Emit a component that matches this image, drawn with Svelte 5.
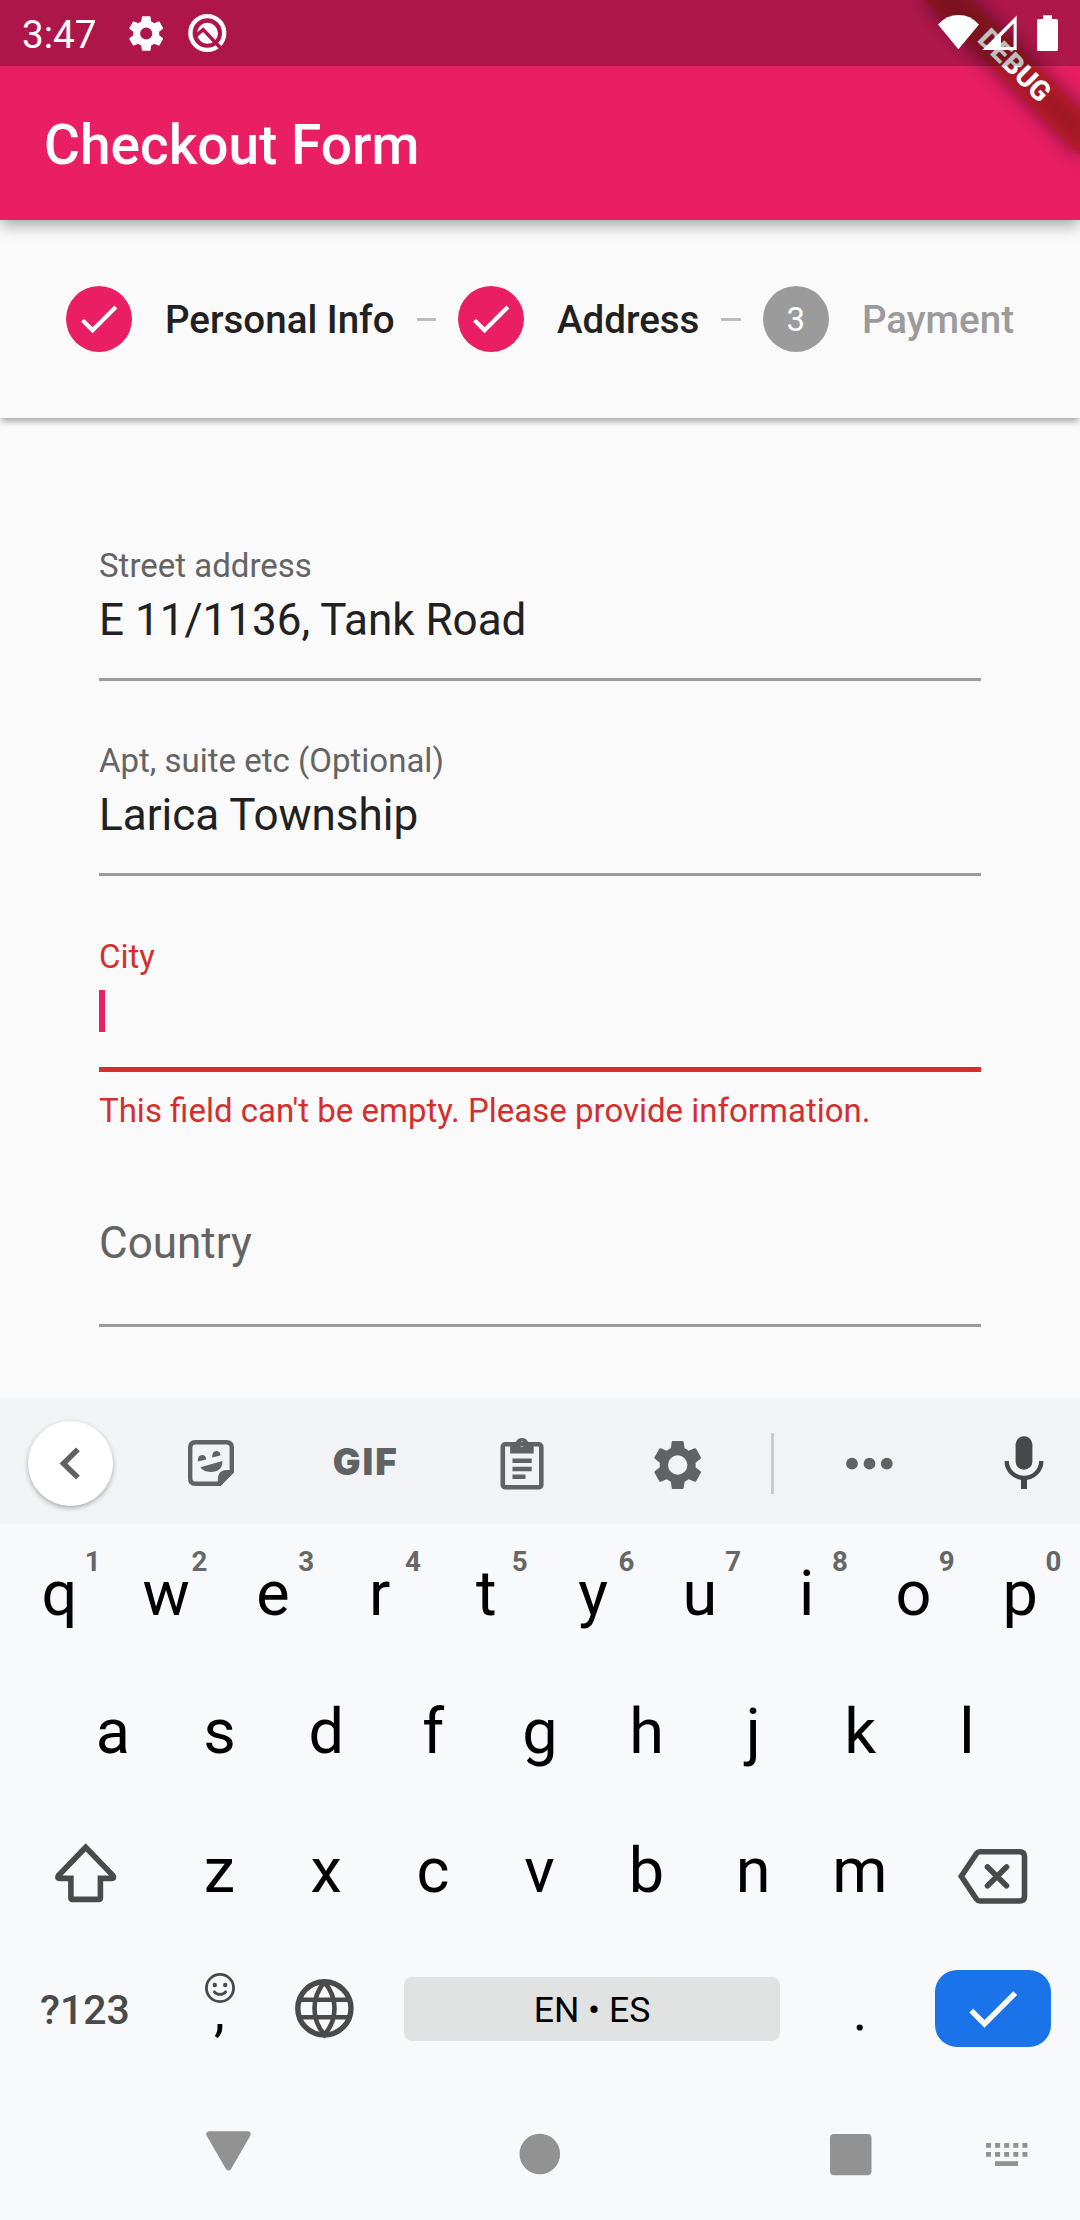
<script>
  const gear =
    'M19.43 12.98c.04-.32.07-.64.07-.98s-.03-.66-.07-.98l2.11-1.65c.19-.15.24-.42.12-.64l-2-3.46c-.12-.22-.39-.3-.61-.22l-2.49 1c-.52-.4-1.08-.73-1.69-.98l-.38-2.65C14.46 2.18 14.25 2 14 2h-4c-.25 0-.46.18-.49.42l-.38 2.65c-.61.25-1.17.59-1.69.98l-2.49-1c-.23-.09-.49 0-.61.22l-2 3.46c-.13.22-.07.49.12.64l2.11 1.65c-.04.32-.07.65-.07.98s.03.66.07.98l-2.11 1.65c-.19.15-.24.42-.12.64l2 3.46c.12.22.39.3.61.22l2.49-1c.52.4 1.08.73 1.69.98l.38 2.65c.03.24.24.42.49.42h4c.25 0 .46-.18.49-.42l.38-2.65c.61-.25 1.17-.59 1.69-.98l2.49 1c.23.09.49 0 .61-.22l2-3.46c.12-.22.07-.49-.12-.64z';
  const smallHole = 'M12 15.5a3.5 3.5 0 1 1 0-7 3.5 3.5 0 0 1 0 7z';
  const largeHole = 'M12 16.05a4.05 4.05 0 1 1 0-8.1 4.05 4.05 0 0 1 0 8.1z';
  const check = 'M9 16.17L4.83 12l-1.42 1.41L9 19 21 7l-1.41-1.41z';

  const steps = [
    { label: 'Personal Info', done: true },
    { label: 'Address', done: true },
    { label: 'Payment', done: false }
  ];

  const fields = [
    { label: 'Street address', value: 'E 11/1136, Tank Road' },
    { label: 'Apt, suite etc (Optional)', value: 'Larica Township' }
  ];

  const topRow = [...'qwertyuiop'].map((letter, i) => ({ letter, digit: (i + 1) % 10 }));
  const homeRow = [...'asdfghjkl'];
  const bottomRow = [...'zxcvbnm'];
  const dotColumns = [986, 995.1, 1004.2, 1013.3, 1022.4];
</script>

<div class="screen">
  <header>
    <div class="statusbar">
      <span class="clock">3:47</span>
      <svg class="notices" viewBox="120 0 120 66">
        <path transform="translate(125.4 12.7) scale(1.735)" fill-rule="evenodd" d="{gear}{smallHole}" />
        <mask id="cut" maskUnits="userSpaceOnUse" x="180" y="0" width="60" height="66">
          <rect x="180" y="0" width="60" height="66" fill="#fff" />
          <path d="M195 36.4L203.2 29.6 222 49.4" fill="none" stroke="#000" stroke-width="3.6" />
        </mask>
        <g mask="url(#cut)">
          <circle cx="207.3" cy="33" r="16.9" fill="none" stroke="#fff" stroke-width="4.4" />
          <circle cx="207.5" cy="33.3" r="10.5" />
        </g>
      </svg>
      <svg class="signals" viewBox="930 0 150 66">
        <path d="M938 24.4Q946.5 15 958.5 15T979 24.4L958.4 49.2z" />
        <path fill-rule="evenodd" d="M982.3 50L1016.7 15.4V50zM1001 47H1013.6V23.5L1001 36.5z" />
        <path d="M1043 19V15.2h9V19h4.5q1.5 0 1.5 1.5v29q0 1.5-1.5 1.5h-18q-1.5 0-1.5-1.5v-29q0-1.5 1.5-1.5z" />
      </svg>
    </div>
    <h1>Checkout Form</h1>
    <div class="ribbon-clip">
      <div class="ribbon"><span>DEBUG</span></div>
    </div>
  </header>

  <nav class="stepper">
    {#each steps as step, i}
      {#if i > 0}<i class="connector"></i>{/if}
      <div class="step" class:pending={!step.done}>
        <span class="bullet">
          {#if step.done}
            <svg viewBox="0 0 24 24"><path d={check} /></svg>
          {:else}
            {i + 1}
          {/if}
        </span>
        <span class="step-label">{step.label}</span>
      </div>
    {/each}
  </nav>

  <main>
    {#each fields as field}
      <div class="field">
        <div class="label">{field.label}</div>
        <div class="value">{field.value}</div>
      </div>
    {/each}
    <div class="field error">
      <div class="label">City</div>
      <div class="value"><i class="caret"></i></div>
    </div>
    <p class="helper">This field can't be empty. Please provide information.</p>
    <div class="field empty">
      <div class="value">Country</div>
    </div>
  </main>

  <section class="keyboard">
    <div class="toolbar">
      <div class="back">
        <svg viewBox="27 1420 86 86"><path d="M77.5 1448.7L62.9 1463l14.6 14.3" /></svg>
      </div>
      <svg class="w142" viewBox="140 1402 142 122">
        <path fill="none" stroke-width="4.4" d="M195.5 1442.2H226.5Q231.8 1442.2 231.8 1447.5V1471.5L219.5 1483.8H195.5Q190.2 1483.8 190.2 1478.5V1447.5Q190.2 1442.2 195.5 1442.2z" />
        <path stroke="none" d="M217.8 1485V1480Q217.8 1470 226 1470H233.5V1472.5L220.5 1486z" />
        <path stroke="none" d="M197.8 1461.4q0-6.4 4.2-6.4t4.2 4.6zM212.2 1457.5q0-6.4 4.1-6.4t4.1 4.5zM200.4 1467.3l22-6.4q0 11-11.8 11-7.4 0-10.2-4.6z" />
      </svg>
      <span class="gif">GIF</span>
      <svg class="w148" viewBox="447.5 1402 148 122">
        <rect x="502.3" y="1444.3" width="38.5" height="43" rx="2.6" fill="none" stroke-width="4.6" />
        <path stroke="none" fill-rule="evenodd" d="M509.6 1442h5.8a6.6 6.6 0 0 1 12.2 0h5.6v11.4h-23.6zM521.4 1441.4a2.7 2.9 0 1 0 .1 0z" />
        <path stroke="none" d="M512 1458.6h19.2v4.4H512zM512 1466.8h19.2v4.4H512zM512 1474.6h13v4.4H512z" />
      </svg>
      <svg class="w163" viewBox="595.6 1402 163.4 122">
        <path stroke="none" fill-rule="evenodd" transform="translate(648.5 1436.2) scale(2.4)" d="{gear}{largeHole}" />
      </svg>
      <i class="divider"></i>
      <svg class="w167" viewBox="786 1402 167 122">
        <g stroke="none">
          <circle cx="852" cy="1463.7" r="5.9" /><circle cx="869.5" cy="1463.7" r="5.9" /><circle cx="886.8" cy="1463.7" r="5.9" />
        </g>
      </svg>
      <svg class="w127 dark" viewBox="953 1402 127 122">
        <rect x="1015.6" y="1436.2" width="16.8" height="33.6" rx="8.4" stroke="none" />
        <path fill="none" stroke-width="4.4" d="M1006.7 1461a17.3 17 0 0 0 34.6 0" />
        <path stroke="none" d="M1021 1477h6v12h-6z" />
      </svg>
    </div>

    <div class="row top">
      {#each topRow as key}
        <div class="key">{key.letter}<sup>{key.digit}</sup></div>
      {/each}
    </div>
    <div class="row home">
      {#each homeRow as letter}<div class="key">{letter}</div>{/each}
    </div>
    <div class="row bottom">
      <svg class="shift" viewBox="0 1801 166 138">
        <path d="M85.7 1847.2L58.7 1875.2Q56.5 1878.4 59.8 1878.4H70.9V1897.8Q70.9 1899.4 72.5 1899.4H98.8Q100.4 1899.4 100.4 1897.8V1878.4H111.6Q114.9 1878.4 112.7 1875.2z" />
      </svg>
      {#each bottomRow as letter}<div class="key">{letter}</div>{/each}
      <svg class="erase" viewBox="913 1801 167 138">
        <path d="M961.3 1876.3L976.5 1853.5Q977.8 1851.7 980 1851.7H1019.6Q1024.5 1851.7 1024.5 1856.6V1896.2Q1024.5 1901 1019.6 1901H980Q977.8 1901 976.5 1899.2z" />
        <path stroke-linecap="round" d="M987.5 1867l19 18.8M1006.5 1867l-19 18.8" />
      </svg>
    </div>
    <div class="row controls">
      <span class="symbols">?123</span>
      <div class="comma">
        <svg viewBox="203 1972 32 32">
          <circle cx="219" cy="1988" r="13.6" />
          <path d="M213.4 1991.8q2 2.6 5.6 2.6t5.6-2.6" stroke-linecap="round" />
          <g class="eyes"><circle cx="213.8" cy="1985" r="2.2" /><circle cx="224.2" cy="1985" r="2.2" /></g>
        </svg>
        <span>,</span>
      </div>
      <svg class="globe" viewBox="269 1939 111 138">
        <circle cx="324.4" cy="2008.4" r="26.6" />
        <path d="M299 1999.8h51M299 2017.2h51" stroke-width="4.6" />
        <path d="M324.4 1982Q314.5 1994 314.5 2008.4T324.4 2034.8Q334.5 2022.8 334.5 2008.4T324.4 1982" stroke-width="4.6" />
      </svg>
      <span class="space">EN • ES</span>
      <span class="period">.</span>
      <span class="enter"><svg viewBox="0 0 24 24"><path d={check} /></svg></span>
    </div>

    <div class="system">
      <svg class="w384" viewBox="0 2077 384 143">
        <path d="M209.3 2134.3h38.4L228.5 2167.4z" stroke="#929292" stroke-width="6" stroke-linejoin="round" />
      </svg>
      <svg class="w312" viewBox="384 2077 312 143"><circle cx="539.8" cy="2154" r="20.3" /></svg>
      <svg class="w230" viewBox="696 2077 230 143"><rect x="830" y="2134" width="41.5" height="41.3" rx="4" /></svg>
      <svg class="w154" viewBox="926 2077 154 143">
        {#each dotColumns as x}
          <rect {x} y="2143" width="5" height="4.8" /><rect {x} y="2152" width="5" height="4.8" />
        {/each}
        <rect x="995" y="2161.2" width="23" height="4.8" />
      </svg>
    </div>
  </section>
</div>

<style>
  :global(body) { margin: 0; }
  .screen {
    width: 1080px;
    height: 2220px;
    overflow: hidden;
    display: flex;
    flex-direction: column;
    background: #fafafa;
    color: #212121;
    font-family: Roboto, sans-serif;
  }
  svg { display: block; flex: none; }

  header {
    position: relative;
    z-index: 3;
    flex: none;
    height: 220px;
    background: #e91e63;
    color: #fff;
    box-shadow: 0 5px 11px -3px rgba(0, 0, 0, 0.2), 0 11px 14px rgba(0, 0, 0, 0.1), 0 3px 16px rgba(0, 0, 0, 0.1);
  }
  .statusbar {
    position: relative;
    z-index: 2;
    display: flex;
    height: 66px;
    background: rgba(0, 0, 0, 0.25);
    fill: #fff;
  }
  .clock { width: 98px; padding-left: 22px; font-size: 38.7px; line-height: 70px; }
  .notices { width: 120px; height: 66px; }
  .signals { width: 150px; height: 66px; margin-left: auto; }
  h1 {
    margin: 0;
    padding-left: 44px;
    font-size: 55px;
    font-weight: 500;
    line-height: 158px;
  }
  .ribbon-clip { position: absolute; inset: 0; overflow: hidden; z-index: 1; }
  .ribbon {
    position: absolute;
    left: 970px;
    top: 77px;
    width: 220px;
    height: 33px;
    transform-origin: 110px -77px;
    transform: rotate(45deg);
  }
  .ribbon::before, .ribbon::after { content: ''; position: absolute; inset: 0; }
  .ribbon::before { background: rgba(0, 0, 0, 0.5); filter: blur(10.9px); }
  .ribbon::after { background: rgba(183, 28, 28, 0.627); }
  .ribbon span {
    position: absolute;
    inset: 0;
    z-index: 1;
    text-align: center;
    font-size: 28px;
    font-weight: 800;
    line-height: 31px;
  }

  .stepper {
    position: relative;
    z-index: 2;
    flex: none;
    display: flex;
    align-items: center;
    box-sizing: border-box;
    height: 198px;
    padding: 0 66px;
    background: #fafafa;
    box-shadow: 0 5px 6px -3px rgba(0, 0, 0, 0.2), 0 4px 7px rgba(0, 0, 0, 0.12), 0 2px 10px rgba(0, 0, 0, 0.1);
  }
  .step { display: flex; align-items: center; gap: 33px; }
  .bullet {
    display: flex;
    align-items: center;
    justify-content: center;
    width: 66px;
    height: 66px;
    border-radius: 50%;
    background: #e91e63;
    color: #fff;
    fill: #fff;
    font-size: 33px;
  }
  .bullet svg { width: 49.5px; height: 49.5px; }
  .step-label { font-size: 38.5px; font-weight: 500; line-height: 48px; padding-top: 1px; }
  .pending .bullet { background: #9b9b9b; }
  .pending .step-label { color: #9b9b9b; }
  .connector { flex: 1; height: 3px; margin: 0 22px; background: #bdbdbd; }

  main { flex: none; box-sizing: border-box; height: 984px; padding: 127px 99px 0; }
  .field { margin-bottom: 59px; border-bottom: 3px solid #9b9b9b; }
  .field + .error { margin-top: 60px; }
  .label { height: 41px; line-height: 41px; font-size: 33px; color: #646464; }
  .value { height: 52px; margin: 8px 0 32px; line-height: 52px; font-size: 44px; }
  .error { margin-bottom: 18px; border-bottom: 5px solid #d32f2f; }
  .error .label { color: #d32f2f; }
  .error .value { display: flex; align-items: center; margin-bottom: 30px; }
  .caret { width: 5.5px; height: 42px; background: #e91e63; }
  .helper { margin: 0 0 86px; font-size: 33px; line-height: 41px; color: #d32f2f; }
  .empty { margin: 0; }
  .empty .value { margin: 0 0 55px; color: #646464; }

  .keyboard {
    position: relative;
    flex: none;
    height: 818px;
    background: #f8f9fb;
    color: #000;
    box-shadow: 0 0 8px rgba(0, 0, 0, 0.07);
  }
  .toolbar {
    display: flex;
    align-items: center;
    height: 122px;
    background: #f1f3f5;
    color: #616264;
    fill: #616264;
    stroke: #616264;
  }
  .toolbar > svg { height: 122px; }
  .back {
    flex: none;
    width: 85px;
    height: 85px;
    margin: 0 27.5px;
    border-radius: 50%;
    background: #fff;
    box-shadow: 0 2px 5px rgba(0, 0, 0, 0.3);
  }
  .back svg { width: 85px; height: 85px; fill: none; stroke-width: 5.6; }
  .w142 { width: 142px; }
  .w148 { width: 148px; }
  .w163 { width: 163.4px; }
  .w167 { width: 167px; }
  .w127 { width: 127px; }
  .dark { fill: #484848; stroke: #484848; }
  .gif {
    flex: none;
    width: 165.5px;
    text-align: center;
    font: 900 36.8px/1 Inter, sans-serif;
    letter-spacing: 2px;
    text-indent: 2px;
    margin-top: -2px;
    stroke: none;
  }
  .divider { flex: none; width: 3px; height: 61px; margin: 0 12px; background: #c9cbcd; }

  .row { display: flex; height: 138px; font-size: 63px; line-height: 138px; }
  .key { position: relative; flex: none; width: 106.75px; text-align: center; }
  .top { height: 139px; padding-left: 6px; line-height: 139px; }
  .home { padding-left: 59.5px; line-height: 137px; }
  .row.bottom { line-height: 139px; }
  sup {
    position: absolute;
    left: 50%;
    top: 24px;
    margin-left: 25.3px;
    width: 16px;
    font-size: 27.7px;
    font-weight: 700;
    line-height: 28px;
    color: #656866;
  }
  .shift, .erase { height: 138px; fill: none; stroke: #4a4a4a; stroke-width: 5.6; }
  .shift { width: 166px; }
  .erase { width: 167px; }
  .controls { align-items: center; }
  .symbols {
    width: 170px;
    flex: none;
    text-align: center;
    font-size: 41px;
    font-weight: 500;
    line-height: 138px;
    color: #4a4a4a;
    padding-top: 4px;
  }
  .comma {
    box-sizing: border-box;
    width: 99px;
    flex: none;
    display: flex;
    flex-direction: column;
    align-items: center;
    height: 138px;
    padding-top: 33px;
  }
  .comma svg { width: 32px; height: 32px; fill: none; stroke: #4a4a4a; stroke-width: 2.8; }
  .eyes { fill: #4a4a4a; stroke: none; }
  .comma span { font-size: 55px; line-height: 40px; margin-top: -13px; }
  .globe { width: 111px; height: 138px; fill: none; stroke: #4a4a4a; stroke-width: 5.4; }
  .space {
    flex: none;
    width: 376px;
    height: 64px;
    margin: 2px 24px 0;
    border-radius: 8px;
    background: #e1e3e2;
    text-align: center;
    font-size: 35.6px;
    line-height: 67px;
  }
  .period { width: 110px; flex: none; text-align: center; font-size: 55px; line-height: 60px; padding-top: 5px; text-indent: 2px; }
  .enter {
    display: flex;
    align-items: center;
    justify-content: center;
    flex: none;
    width: 116px;
    height: 77px;
    margin: 1px 0 0 21px;
    border-radius: 22px;
    background: #1a73e8;
    fill: #fff;
  }
  .enter svg { width: 65.3px; height: 65.3px; }

  .system { display: flex; height: 143px; fill: #929292; }
  .system svg { height: 143px; }
  .w384 { width: 384px; }
  .w312 { width: 312px; }
  .w230 { width: 230px; }
  .w154 { width: 154px; }
</style>
